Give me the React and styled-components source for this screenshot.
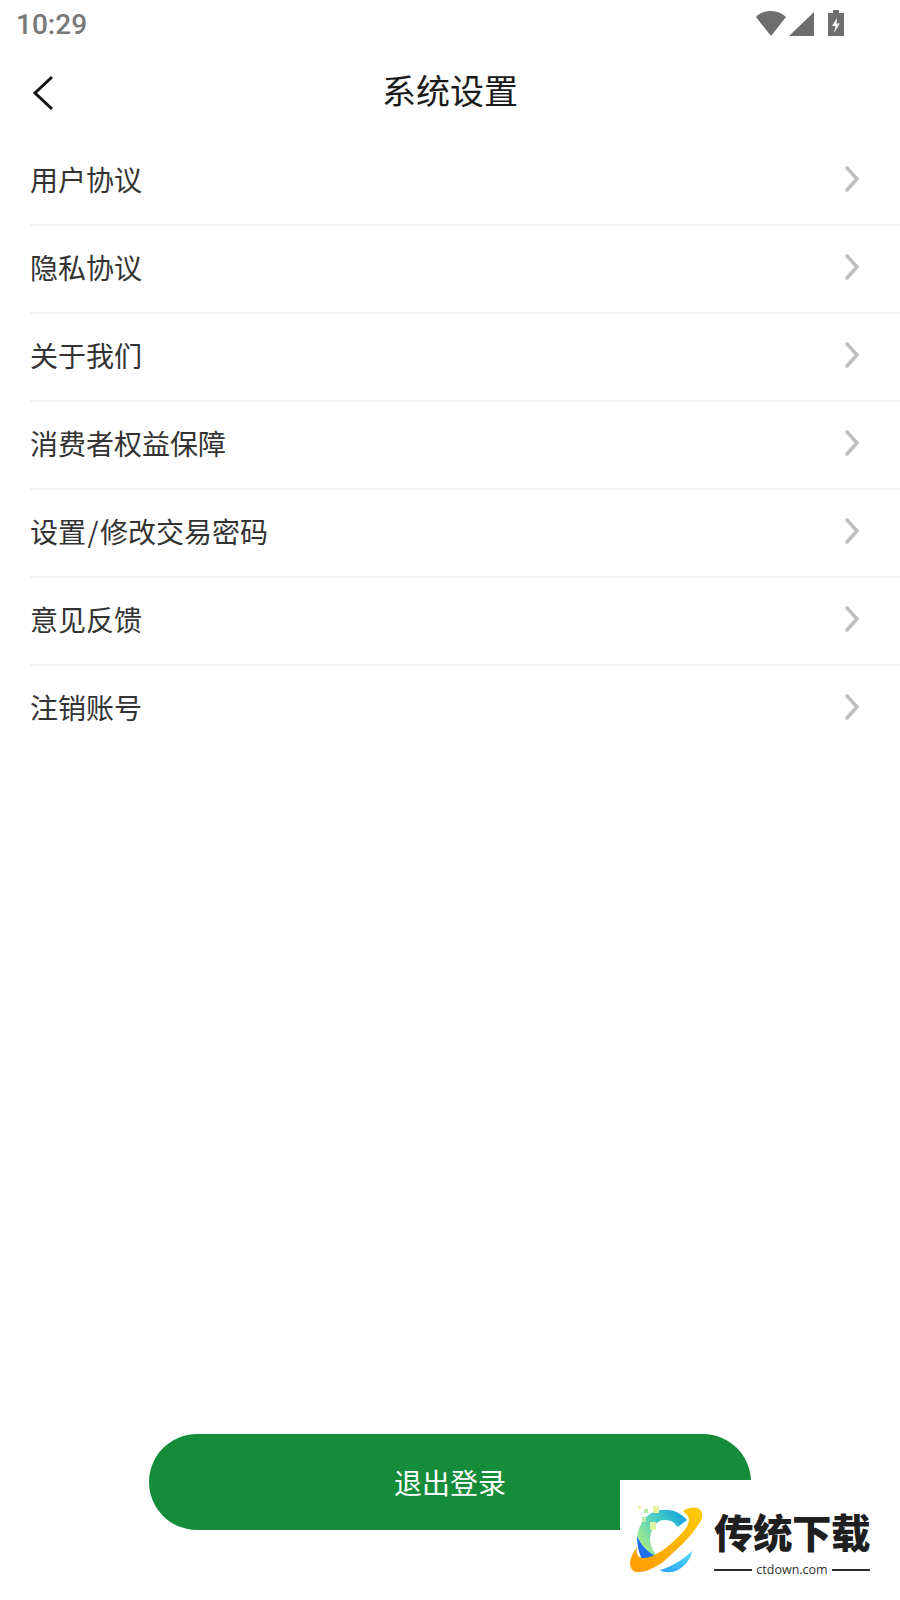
import React from "react";
import styled, { createGlobalStyle } from "styled-components";

const GlobalStyle = createGlobalStyle`
  html, body {
    margin: 0;
    padding: 0;
    background: #fff;
  }
  * {
    box-sizing: border-box;
  }
`;

const CJK = `"Noto Sans CJK SC", "Noto Sans", sans-serif`;

const Page = styled.div`
  position: relative;
  width: 900px;
  height: 1600px;
  overflow: hidden;
  background: #fff;
  display: flex;
  flex-direction: column;
  font-family: ${CJK};
`;

const StatusBar = styled.div`
  height: 50px;
  padding: 0 56px 0 16px;
  display: flex;
  align-items: center;
  justify-content: space-between;
  color: #787878;
`;

const Time = styled.span`
  font-family: Roboto, sans-serif;
  font-size: 28px;
  font-weight: 500;
  line-height: 50px;
`;

const StatusIcons = styled.svg`
  display: block;
  margin-top: -4px;
`;

const NavBar = styled.header`
  height: 88px;
  position: relative;
  display: flex;
  justify-content: center;
`;

const BackIcon = styled.svg`
  position: absolute;
  left: 32px;
  top: 25px;
`;

const Title = styled.h1`
  margin: 0;
  font-size: 34px;
  font-weight: 400;
  color: #1a1a1a;
  line-height: 80px;
`;

const Menu = styled.ul`
  list-style: none;
  margin: 0;
  padding: 0 0 0 30px;
`;

const Row = styled.li`
  height: 88px;
  padding: 0 40px 4px 0;
  display: flex;
  align-items: center;
  justify-content: space-between;
  border-bottom: 2px solid ${(props) => (props.last ? "transparent" : "#f2f2f2")};
`;

const Label = styled.span`
  font-size: 28px;
  color: #333;
`;

const Slash = styled.span`
  margin: 0 1.5px;
`;

const ButtonSlot = styled.div`
  margin-top: auto;
  padding-bottom: 70px;
  display: flex;
  justify-content: center;
`;

const LogoutButton = styled.button`
  width: 602px;
  height: 96px;
  border: none;
  border-radius: 48px;
  background: #148c3a;
  color: #fff;
  font-family: ${CJK};
  font-size: 28px;
`;

const Watermark = styled.div`
  position: absolute;
  left: 620px;
  top: 1480px;
  width: 280px;
  height: 120px;
  background: #fff;
  padding: 15px 0 0 0;
  display: flex;
`;

const Brand = styled.div`
  margin: 11px 0 0 -6px;
  width: 156px;
  display: flex;
  flex-direction: column;
  align-items: stretch;
`;

const BrandName = styled.div`
  font-size: 39.5px;
  font-weight: 900;
  line-height: 50px;
  letter-spacing: -0.5px;
  color: #1f1f1f;
  white-space: nowrap;
`;

const BrandUrl = styled.div`
  display: flex;
  align-items: center;
  gap: 4px;
  margin-top: 7px;
  font-family: "Open Sans", sans-serif;
  font-size: 12.5px;
  line-height: 14px;
  color: #333;
  &::before,
  &::after {
    content: "";
    flex: 1;
    height: 2px;
    background: #2a2a2a;
  }
`;

const Chevron = () => (
  <svg width="16" height="26" viewBox="0 0 16 26" fill="none">
    <path d="M3 2l10 11L3 24" stroke="#bfbfbf" strokeWidth="3.6" strokeLinecap="round" strokeLinejoin="round" />
  </svg>
);

const Logo = () => (
  <svg width="100" height="80" viewBox="0 0 100 80" style={{ flex: "none" }}>
    <defs>
      <linearGradient id="arc" x1="0.95" y1="0.1" x2="0.05" y2="0.75">
        <stop offset="0" stopColor="#14a4dc" />
        <stop offset="0.5" stopColor="#4fd0c0" />
        <stop offset="1" stopColor="#a8ec88" />
      </linearGradient>
      <linearGradient id="ring" x1="1" y1="0" x2="0" y2="1">
        <stop offset="0" stopColor="#ffcb05" />
        <stop offset="1" stopColor="#ff9a00" />
      </linearGradient>
      <linearGradient id="low" x1="1" y1="0" x2="0" y2="1">
        <stop offset="0" stopColor="#55d8fb" />
        <stop offset="1" stopColor="#28a2f4" />
      </linearGradient>
    </defs>
    <path d="M67 25L58 32L53 27C49 25 46 25 43 25C36 26 31 34 30 43C30 50 33 57 38 62L24 62C19 55 17 49 17 43C18 30 27 15 43 15C52 14 61 18 67 25Z" fill="url(#arc)" />
    <path d="M17 41C20 49 28 58 39 63L25 70C20 62 17 52 17 41Z" fill="#1f6ff0" />
    <path d="M63 16C68 13 75 11 79 14C84 17 83 25 78 30C72 40 60 52 43 67C34 73 26 77 20 77C13 78 10 74 10 67C11 61 14 56 17 52C16 57 17 62 22 63C33 64 48 53 63 37C68 31 70 26 68 21Z" fill="url(#ring)" />
    <path d="M72 56C71 62 68 69 58 75C52 78 44 78 40 75C48 73 62 66 72 56Z" fill="url(#low)" />
    <rect x="33" y="11" width="6" height="7" fill="#e4f2a2" />
    <rect x="18" y="11" width="3" height="3" fill="#e8f0a0" />
    <rect x="24" y="14" width="4" height="4" fill="#b8e8a0" />
    <rect x="22" y="22" width="4" height="5" fill="#b8ecb0" />
    <rect x="30" y="27" width="6" height="8" fill="#dcf2a8" />
  </svg>
);

const items = [
  "用户协议",
  "隐私协议",
  "关于我们",
  "消费者权益保障",
  <>设置<Slash>/</Slash>修改交易密码</>,
  "意见反馈",
  "注销账号",
];

export default function App() {
  return (
    <Page>
      <GlobalStyle />
      <StatusBar>
        <Time>10:29</Time>
        <StatusIcons width="88" height="26" viewBox="0 0 88 26" fill="#6e6e6e">
          <path d="M0 7C4 3 9 1 15 1C21 1 26 3 30 7L15 26Z" />
          <path d="M33 26L58 2V26Z" />
          <path d="M77 0H83V3H88V26H72V3H77Z" />
          <path d="M81 8L76 16H79.5L78 23L84 13.5H80.5Z" fill="#fff" />
        </StatusIcons>
      </StatusBar>
      <NavBar>
        <BackIcon width="22" height="36" viewBox="0 0 22 36" fill="none">
          <path d="M20 2L3 18L20 34" stroke="#111" strokeWidth="3" />
        </BackIcon>
        <Title>系统设置</Title>
      </NavBar>
      <Menu>
        {items.map((item, i) => (
          <Row key={i} last={i === items.length - 1}>
            <Label>{item}</Label>
            <Chevron />
          </Row>
        ))}
      </Menu>
      <ButtonSlot>
        <LogoutButton>退出登录</LogoutButton>
      </ButtonSlot>
      <Watermark>
        <Logo />
        <Brand>
          <BrandName>传统下载</BrandName>
          <BrandUrl>ctdown.com</BrandUrl>
        </Brand>
      </Watermark>
    </Page>
  );
}
